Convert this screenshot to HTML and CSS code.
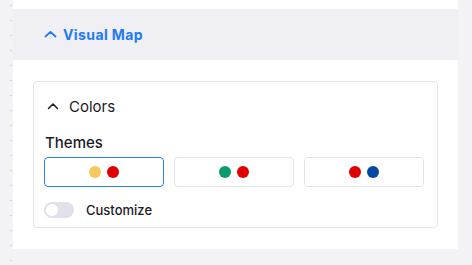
FILE: index.html
```html
<!DOCTYPE html>
<html>
<head>
<meta charset="utf-8">
<link rel="stylesheet" href="styles.css">
</head>
<body>
<div class="page">
  <div class="rail"></div>
  <div class="panel">
    <div class="section-head">
      <svg class="chev-blue" width="13" height="8" viewBox="0 0 13 8"><path d="M1.5 6.5 L6.5 1.8 L11.5 6.5" fill="none" stroke="#1f7bf4" stroke-width="1.8" stroke-linecap="round" stroke-linejoin="round"/></svg>
      <span class="section-title">Visual Map</span>
    </div>
    <div class="section-body">
      <div class="card">
        <div class="card-head">
          <svg class="chev" width="12" height="8" viewBox="0 0 12 8"><path d="M1.5 6.5 L6 2 L10.5 6.5" fill="none" stroke="#1b1b24" stroke-width="1.5" stroke-linecap="round" stroke-linejoin="round"/></svg>
          <span class="card-title">Colors</span>
        </div>
        <div class="label">Themes</div>
        <div class="themes">
          <button class="theme selected"><span class="dot yellow"></span><span class="dot red"></span></button>
          <button class="theme"><span class="dot green"></span><span class="dot red"></span></button>
          <button class="theme"><span class="dot red"></span><span class="dot blue"></span></button>
        </div>
        <div class="toggle-row">
          <span class="toggle"><span class="knob"></span></span>
          <span class="toggle-label">Customize</span>
        </div>
      </div>
    </div>
  </div>
</div>
</body>
</html>
```
FILE: styles.css
```css
* { box-sizing: border-box; }
html, body { margin: 0; padding: 0; }
body {
  background: #f3f3f6;
  font-family: "Inter", "Noto Sans", sans-serif;
  width: 472px;
  height: 265px;
  overflow: hidden;
}
.page { display: flex; align-items: flex-start; }
.rail {
  width: 13px;
  height: 265px;
  background-image: radial-gradient(circle, #d6d6de 0.7px, transparent 1px);
  background-size: 2px 15px;
  background-position: 10px -2px;
  background-repeat: repeat-y;
}
.panel {
  width: 445px;
  height: 249px;
  background: #fff;
  padding-top: 9px;
}
.section-head {
  height: 51px;
  background: #efeff4;
  display: flex;
  align-items: center;
  padding-left: 31px;
  gap: 6px;
}
.chev-blue { margin-top: -1px; }
.section-title {
  color: #1f7bf4;
  font-weight: 700;
  font-size: 14px;
  letter-spacing: 0.4px;
}
.section-body { padding: 21px 20px 0 20px; }
.card {
  height: 147px;
  border: 1px solid #e3e3e8;
  border-radius: 4px;
  padding: 0 13px 0 10px;
}
.card-head {
  display: flex;
  align-items: center;
  height: 48px;
  padding-left: 3px;
  gap: 10px;
}
.card-title { font-size: 15px; color: #1b1b24; }
.label {
  font-size: 15px;
  font-weight: 500;
  color: #1b1b24;
  line-height: 18px;
  padding-left: 1px;
  margin-top: 4px;
}
.themes {
  display: flex;
  gap: 10px;
  margin-top: 5px;
}
.theme {
  width: 120px;
  height: 30px;
  border: 1px solid #e3e3e8;
  border-radius: 4px;
  background: #fff;
  display: flex;
  align-items: center;
  justify-content: center;
  gap: 6px;
  padding: 0;
}
.theme.selected { border-color: #2b7fef; }
.dot { width: 12px; height: 12px; border-radius: 50%; display: block; }
.yellow { background: #f6c95d; }
.red { background: #e10000; }
.green { background: #0c9a6e; }
.blue { background: #0048a0; }
.toggle-row {
  display: flex;
  align-items: center;
  margin-top: 15px;
  gap: 12px;
}
.toggle {
  width: 30px;
  height: 16px;
  border-radius: 8px;
  background: #e0e1e9;
  display: flex;
  align-items: center;
  padding-left: 2px;
}
.knob { width: 12px; height: 12px; border-radius: 50%; background: #fff; }
.toggle-label { font-size: 13px; font-weight: 500; color: #1b1b24; }
```
